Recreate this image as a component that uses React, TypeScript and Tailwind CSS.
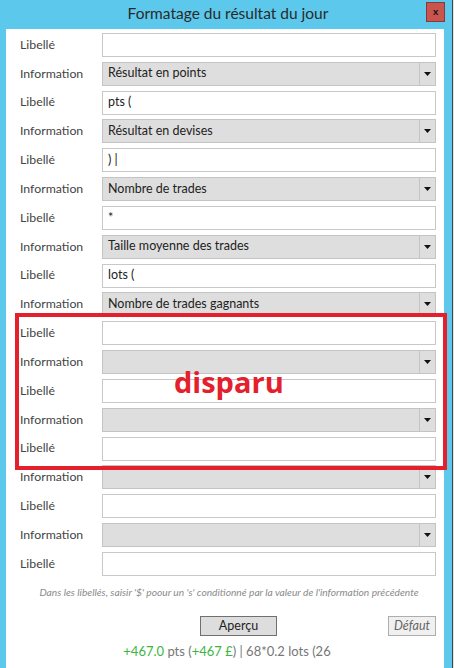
const rows: { kind: "label" | "info"; value: string }[] = [
  { kind: "label", value: "" },
  { kind: "info", value: "Résultat en points" },
  { kind: "label", value: "pts (" },
  { kind: "info", value: "Résultat en devises" },
  { kind: "label", value: ") |" },
  { kind: "info", value: "Nombre de trades" },
  { kind: "label", value: "*" },
  { kind: "info", value: "Taille moyenne des trades" },
  { kind: "label", value: "lots (" },
  { kind: "info", value: "Nombre de trades gagnants" },
  { kind: "label", value: "" },
  { kind: "info", value: "" },
  { kind: "label", value: "" },
  { kind: "info", value: "" },
  { kind: "label", value: "" },
  { kind: "info", value: "" },
  { kind: "label", value: "" },
  { kind: "info", value: "" },
  { kind: "label", value: "" },
];

const Combo = ({ value }: { value: string }) => (
  <div className="h-[24px] flex border border-[#c4c4c4] bg-[#dedede]">
    <div className="flex-1 flex items-center pl-[5px] text-[12.5px] text-[#222]">{value}</div>
    <div className="w-[16px] border-l border-[#c4c4c4] flex items-center justify-center">
      <svg width="7" height="4" viewBox="0 0 7 4">
        <path d="M0 0h7L3.5 4z" fill="#111" />
      </svg>
    </div>
  </div>
);

const TextBox = ({ value }: { value: string }) => (
  <div className="h-[24px] flex items-center border border-[#c8c8c8] bg-white pl-[5px] text-[12.5px] text-[#222]">
    {value}
  </div>
);

export default function App() {
  return (
    <div className="w-[454px] h-[668px] overflow-hidden flex bg-[#f0f0f0] font-['Lato',sans-serif]">
      <div className="w-[452px] bg-[#5cc9ec] flex flex-col pl-[6px] pr-[8px]">
        <div className="h-[29px] relative flex items-center justify-center">
          <span className="text-[15.5px] text-[#2a2a2a] pl-[6px] pb-[2px]">Formatage du résultat du jour</span>
          <div className="absolute right-[-1px] top-[2px] w-[19px] h-[20px] bg-[#c85450] border border-[#8a3a36] flex items-center justify-center">
            <span className="text-[10px] font-bold text-[#111] leading-none pb-[2px]">x</span>
          </div>
        </div>

        <div className="flex-1 bg-white relative pt-[4px] pl-[14px] pr-[8px]">
          <div className="grid grid-cols-[82px_1fr] gap-y-[4.83px]">
            {rows.map((r, i) => (
              <div key={i} className="contents">
                <div className="flex items-center text-[12.3px] text-[#444]">
                  {r.kind === "label" ? "Libellé" : "Information"}
                </div>
                {r.kind === "label" ? <TextBox value={r.value} /> : <Combo value={r.value} />}
              </div>
            ))}
          </div>

          <p className="mt-[9px] text-center italic text-[10.2px] text-[#8a8a8a] pl-[2px]">
            Dans les libellés, saisir '$' poour un 's' conditionné par la valeur de l'information précédente
          </p>

          <div className="mt-[16px] flex items-center">
            <div className="ml-[180px] w-[77px] h-[20px] border border-[#707070] bg-[#dddddd] flex items-center justify-center text-[12.5px] text-[#222]">
              Aperçu
            </div>
            <div className="ml-auto w-[48px] h-[20px] border border-[#adadad] bg-[#f0f0f0] flex items-center justify-center text-[12.5px] italic text-[#666]">
              Défaut
            </div>
          </div>

          <div className="mt-[6px] text-center text-[13px] text-[#777] pr-[2px]">
            <span className="text-[#3cb543]">+467.0</span> pts (<span className="text-[#3cb543]">+467 £</span>) | 68*0.2 lots (26
          </div>

          {/* annotation frame over the empty rows */}
          <div className="absolute left-[9px] top-[284px] w-[432px] h-[157px] border-[4px] border-[#e3202c]">
            <span className="absolute left-[155px] top-[50px] text-[29px] font-bold text-[#e3202c] font-['Open_Sans',sans-serif] leading-none">
              disparu
            </span>
          </div>
        </div>
      </div>
      <div className="w-px bg-[#3d4650]" />
      <div className="w-px bg-[#e6e6e6]" />
    </div>
  );
}
